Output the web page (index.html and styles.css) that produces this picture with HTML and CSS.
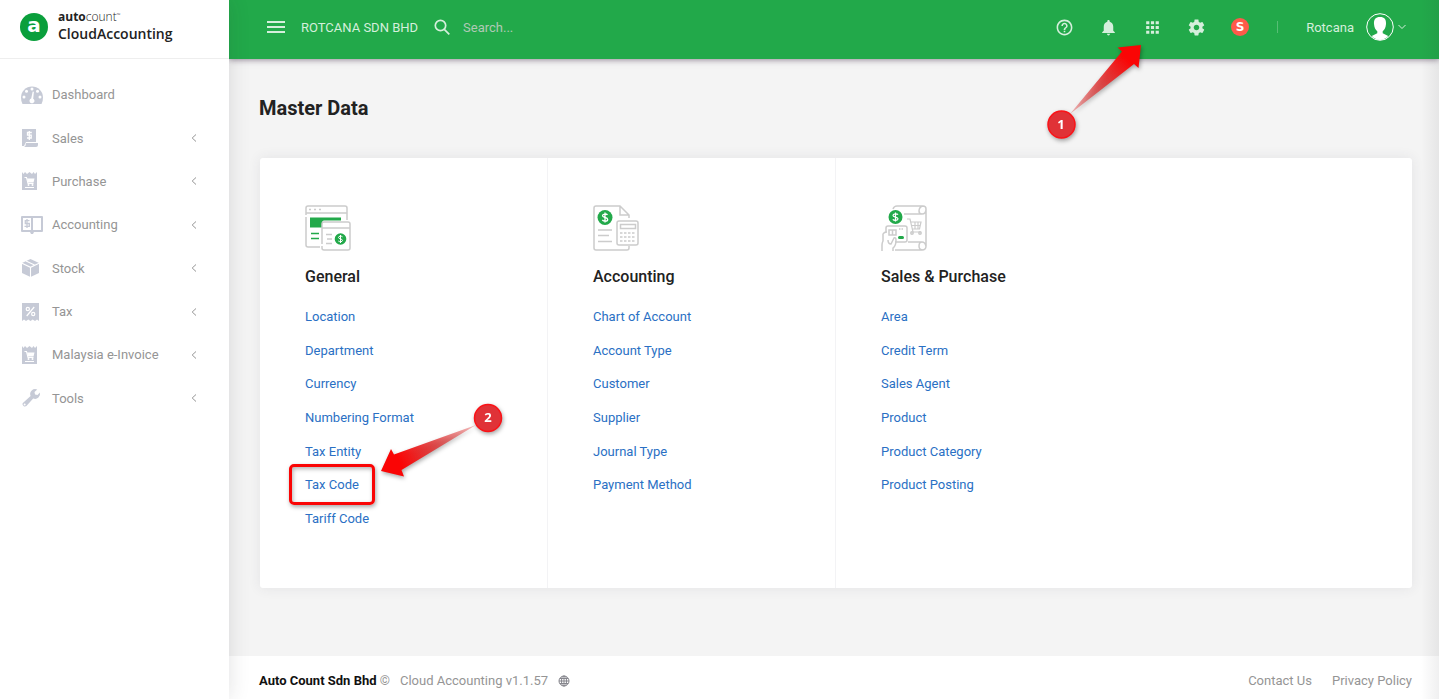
FILE: index.html
```html
<!DOCTYPE html>
<html lang="en">
<head>
  <meta charset="UTF-8" />
  <meta name="viewport" content="width=device-width, initial-scale=1" />
  <title>Master Data - AutoCount Cloud Accounting</title>
  <link rel="stylesheet" href="styles.css">
</head>
<body>
  <aside class="sidebar">
    <a class="brand" href="#">
      <span class="brand-mark">a</span>
      <span class="brand-text">
        <span class="brand-top"><b>auto</b>count<small>&#8482;</small></span>
        <span class="brand-bottom">CloudAccounting</span>
      </span>
    </a>
    <nav class="menu">
      <a href="#">
        <svg class="menu-icon" viewBox="0 0 24 20"><path d="M2.500 19Q1 16 1 12.500a11 11 0 0 1 22 0Q23 16 21.500 19z"/><g fill="#fff"><circle cx="12" cy="4" r="1.500"/><circle cx="6.500" cy="6.300" r="1.500"/><circle cx="17.500" cy="6.300" r="1.500"/><circle cx="4" cy="12" r="1.500"/><circle cx="20" cy="12" r="1.500"/><path d="M12.700 6.500l1.200.2-.7 7a2.500 2.500 0 1 1-2-.2z"/></g></svg>
        <span>Dashboard</span>
      </a>
      <a href="#">
        <svg class="menu-icon" viewBox="0 0 24 20"><path d="M2 1h14v13H6l-2 4H2zM6 15h12v2q0 2-2 2H4q2-1 2-4z"/><path d="M11.800 4.500H7.500v2.700h3.700v2.800H7M9.300 3v9" fill="none" stroke="#fff" stroke-width="1.300"/></svg>
        <span>Sales</span>
        <svg class="arrow" viewBox="0 0 6 8"><path d="M5 .5L1.200 4 5 7.500"/></svg>
      </a>
      <a href="#">
        <svg class="menu-icon" viewBox="0 0 24 20"><path d="M2 1l1.500 2L5 1l2 2 2.500-2L12 3l1.500-2L15 3l2-2v18H2z"/><path d="M4.500 6.500h2l1.500 6h5.500M5 16.500h9" fill="none" stroke="#fff" stroke-width="1.100"/><path d="M7 7.500h7.500l-1 4H8z" fill="#fff"/><g fill="#fff"><circle cx="8.500" cy="14" r="1"/><circle cx="12.500" cy="14" r="1"/></g></svg>
        <span>Purchase</span>
        <svg class="arrow" viewBox="0 0 6 8"><path d="M5 .5L1.200 4 5 7.500"/></svg>
      </a>
      <a href="#">
        <svg class="menu-icon" viewBox="0 0 24 20"><path fill-rule="evenodd" d="M2 1h20q1 0 1 1v14q0 1-1 1h-8l-1 2h-2l-1-2H2q-1 0-1-1V2q0-1 1-1zM3 3v12h8V3zM13 3v12h8V3z"/><path d="M9.500 5.700H5.300v2.800h4v2.900H4.500M7 4v9" fill="none" stroke="#c6cad6" stroke-width="1.300"/></svg>
        <span>Accounting</span>
        <svg class="arrow" viewBox="0 0 6 8"><path d="M5 .5L1.200 4 5 7.500"/></svg>
      </a>
      <a href="#">
        <svg class="menu-icon" viewBox="0 0 24 20"><path d="M10.500 1l8.500 4v10l-8.500 4L2 15V5z"/><path d="M2 5.300l8.500 4 8.500-4M10.500 9.300V19M6 3l8.500 4" fill="none" stroke="#fff" stroke-width="1.100"/></svg>
        <span>Stock</span>
        <svg class="arrow" viewBox="0 0 6 8"><path d="M5 .5L1.200 4 5 7.500"/></svg>
      </a>
      <a href="#">
        <svg class="menu-icon" viewBox="0 0 24 20"><path d="M2 1h17v18l-2-1.500-2 1.500-2.300-1.500L10.500 19l-2.200-1.500L6 19l-2-1.500L2 19z"/><g fill="none" stroke="#fff" stroke-width="1.200"><circle cx="7.800" cy="7" r="1.600"/><circle cx="13.200" cy="12" r="1.600"/><path d="M14.200 5l-7.500 9"/></g></svg>
        <span>Tax</span>
        <svg class="arrow" viewBox="0 0 6 8"><path d="M5 .5L1.200 4 5 7.500"/></svg>
      </a>
      <a href="#">
        <svg class="menu-icon" viewBox="0 0 24 20"><path d="M2 1l1.500 2L5 1l2 2 2.500-2L12 3l1.500-2L15 3l2-2v18H2z"/><path d="M4.500 6.500h2l1.500 6h5.500M5 16.500h9" fill="none" stroke="#fff" stroke-width="1.100"/><path d="M7 7.500h7.500l-1 4H8z" fill="#fff"/><g fill="#fff"><circle cx="8.500" cy="14" r="1"/><circle cx="12.500" cy="14" r="1"/></g></svg>
        <span>Malaysia e-Invoice</span>
        <svg class="arrow" viewBox="0 0 6 8"><path d="M5 .5L1.200 4 5 7.500"/></svg>
      </a>
      <a href="#">
        <svg class="menu-icon" viewBox="0 0 24 20"><path fill-rule="evenodd" d="M2.600 15.200l8-7.200a5 5 0 0 1 6.700-6.500L14.500 4l.5 2.500 2.500.6 2.400-2.600a5 5 0 0 1-6.700 6L6.400 18a2.500 2.500 0 0 1-3.800-2.800zM4.600 15.500a1 1 0 1 0 .1 2 1 1 0 0 0-.1-2z"/></svg>
        <span>Tools</span>
        <svg class="arrow" viewBox="0 0 6 8"><path d="M5 .5L1.200 4 5 7.500"/></svg>
      </a>
    </nav>
  </aside>

  <div class="page">
    <header class="topbar">
      <button class="toggle" type="button" aria-label="Toggle menu">
        <svg viewBox="0 0 18 12" width="18" height="12"><path d="M0 0h18v2H0zM0 5h18v2H0zM0 10h18v2H0z"/></svg>
      </button>
      <span class="company">ROTCANA SDN BHD</span>
      <label class="search-icon" for="search" aria-label="Search">
        <svg viewBox="0 0 16 16" width="16" height="16"><g fill="none" stroke="#d5efdc" stroke-width="1.700"><circle cx="6.500" cy="6.500" r="5.200"/><path d="M10.300 10.300l5 5"/></g></svg>
      </label>
      <input id="search" class="search" type="text" placeholder="Search...">
      <div class="tools">
        <div class="tool">
          <button type="button" aria-label="Help"><svg viewBox="0 0 24 24" width="19" height="19"><path d="M11 18h2v-2h-2v2zm1-16C6.480 2 2 6.480 2 12s4.480 10 10 10 10-4.480 10-10S17.520 2 12 2zm0 18c-4.410 0-8-3.590-8-8s3.590-8 8-8 8 3.590 8 8-3.590 8-8 8zm0-14c-2.210 0-4 1.790-4 4h2c0-1.100.9-2 2-2s2 .9 2 2c0 2-3 1.750-3 5h2c0-2.250 3-2.500 3-5 0-2.210-1.790-4-4-4z"/></svg></button>
        </div>
        <div class="tool">
          <button type="button" aria-label="Notifications"><svg viewBox="0 0 24 24" width="19" height="19"><path d="M12 22c1.100 0 2-.9 2-2h-4c0 1.100.89 2 2 2zm6-6v-5c0-3.070-1.640-5.640-4.500-6.320V4c0-.83-.67-1.500-1.500-1.500s-1.500.67-1.500 1.500v.68C7.630 5.360 6 7.920 6 11v5l-2 2v1h16v-1l-2-2z"/></svg></button>
        </div>
        <div class="tool">
          <button type="button" aria-label="Master data"><svg viewBox="0 0 24 24" width="19" height="19"><path d="M4 8h4V4H4v4zm6 12h4v-4h-4v4zm-6 0h4v-4H4v4zm0-6h4v-4H4v4zm6 0h4v-4h-4v4zm6-10v4h4V4h-4zm-6 4h4V4h-4v4zm6 6h4v-4h-4v4zm0 6h4v-4h-4v4z"/></svg></button>
          <svg class="callout callout-apps" viewBox="0 0 110 110" width="110" height="110">
            <defs>
              <linearGradient id="fadeUp" x1="30" y1="79" x2="101" y2="10" gradientUnits="userSpaceOnUse">
                <stop offset="0" stop-color="#e03030" stop-opacity=".3"/>
                <stop offset=".45" stop-color="#e03030" stop-opacity=".85"/>
                <stop offset=".8" stop-color="#fa0505"/>
              </linearGradient>
            </defs>
            <path d="M101 10L77.500 12.500 82 16.500 30 79 94 29 98.500 33z" fill="url(#fadeUp)"/>
            <circle cx="21.500" cy="89.500" r="13.500" fill="#e03237" stroke="#fb1217" stroke-width="1.500"/>
            <text x="21" y="94">1</text>
          </svg>
        </div>
        <div class="tool">
          <button type="button" aria-label="Settings"><svg viewBox="0 0 24 24" width="19" height="19"><path d="M19.430 12.980c.04-.32.070-.64.070-.98s-.03-.66-.07-.98l2.110-1.650c.19-.15.240-.42.120-.64l-2-3.460c-.12-.22-.39-.3-.61-.22l-2.490 1c-.52-.4-1.080-.73-1.690-.98l-.38-2.650C14.460 2.180 14.250 2 14 2h-4c-.25 0-.46.180-.49.420l-.38 2.650c-.61.250-1.170.590-1.690.980l-2.490-1c-.23-.09-.49 0-.61.220l-2 3.460c-.13.220-.07.490.120.640l2.110 1.650c-.04.320-.07.650-.07.980s.03.660.070.980l-2.110 1.650c-.19.150-.24.420-.12.640l2 3.460c.12.220.390.300.610.220l2.490-1c.52.400 1.080.730 1.690.980l.38 2.650c.03.240.240.420.490.420h4c.25 0 .46-.18.490-.42l.38-2.650c.61-.25 1.170-.59 1.690-.98l2.490 1c.23.090.49 0 .61-.22l2-3.460c.12-.22.070-.49-.12-.64l-2.110-1.650zM12 15.500c-1.930 0-3.500-1.570-3.500-3.500s1.570-3.500 3.500-3.500 3.500 1.570 3.500 3.500-1.570 3.500-3.500 3.500z"/></svg></button>
        </div>
        <div class="tool">
          <button class="status-dot" type="button">S</button>
        </div>
      </div>
      <span class="divider"></span>
      <button class="user" type="button">
        <span>Rotcana</span>
        <svg viewBox="0 0 28 28" width="28" height="28" aria-hidden="true">
          <circle cx="14" cy="14" r="13.300" fill="none" stroke="#fff" stroke-width="1"/>
          <path d="M14 4c4.500 0 6.300 2.600 6 7-.3 3.500-1.500 6-3.300 7.300v2l5.500 2.700A12 12 0 0 1 14 27a12 12 0 0 1-8.200-4l5.500-2.700v-2C9.500 17 8.300 14.500 8 11c-.3-4.400 1.500-7 6-7z" fill="#fff"/>
        </svg>
        <svg viewBox="0 0 8 6" width="8" height="6" aria-hidden="true"><path d="M.5 1L4 4.500 7.500 1" fill="none" stroke="#d5efdc"/></svg>
      </button>
    </header>

    <main class="content">
      <h1>Master Data</h1>
      <div class="card">
        <section class="group">
          <svg class="group-icon" viewBox="0 0 46 46" width="46" height="46" fill="none" stroke="#ccc" stroke-width="1.500">
            <path d="M1 10V3q0-2 2-2h37q2 0 2 2v12M1 12v28q0 2 2 2h12M1 8h41"/>
            <path d="M4 4.500h2M9 4.500h2M14 4.500h2"/>
            <path d="M5 12.500h31v3H19q-2 0-2 3v4H5z" fill="#22a94a" stroke="none"/>
            <path d="M6 28.500h8M6 33.500h8" stroke="#22a94a"/>
            <path d="M17 39V19q0-2 2-2h24q2 0 2 2v24q0 2-2 2H19q-2 0-2-2v-2M17 23h28M21 29.500h6M22 34h5M21 38.500h6"/>
            <circle cx="35.500" cy="34" r="5.800" fill="#22a94a" stroke="none"/>
            <path d="M37.500 31.800c-1-1-4-.9-4 .7s4 1.200 4 2.900-3 1.600-4.200.6M35.500 30v8" stroke="#fff" stroke-width="1"/>
          </svg>
          <h2>General</h2>
          <ul>
            <li><a href="#">Location</a></li>
            <li><a href="#">Department</a></li>
            <li><a href="#">Currency</a></li>
            <li><a href="#">Numbering Format</a></li>
            <li><a href="#">Tax Entity</a></li>
            <li class="marked">
              <a href="#">Tax Code</a>
              <svg class="callout callout-tax" viewBox="0 0 140 90" width="140" height="90">
                <defs>
                  <linearGradient id="fadeDown" x1="106" y1="25" x2="11" y2="71" gradientUnits="userSpaceOnUse">
                    <stop offset="0" stop-color="#e03030" stop-opacity=".3"/>
                    <stop offset=".45" stop-color="#e03030" stop-opacity=".85"/>
                    <stop offset=".8" stop-color="#fa0505"/>
                  </linearGradient>
                </defs>
                <path d="M11 71L21 49l3 5.500L106 25 31.500 70l2.500 6.500z" fill="url(#fadeDown)"/>
                <circle cx="118" cy="18" r="13.500" fill="#e03237" stroke="#fb1217" stroke-width="1.500"/>
                <text x="118" y="22">2</text>
              </svg>
            </li>
            <li><a href="#">Tariff Code</a></li>
          </ul>
        </section>
        <section class="group">
          <svg class="group-icon" viewBox="0 0 46 46" width="46" height="46" fill="none" stroke="#ccc" stroke-width="1.500">
            <path d="M36 13v-3L27 1H3Q1 1 1 3v40q0 2 2 2h31q2 0 2-2v-2M27 1v9h9"/>
            <circle cx="12" cy="12.500" r="7.500" fill="#22a94a" stroke="none"/>
            <path d="M14.500 10c-1-1.500-5-1.300-5 .8s5.200 1.300 5.200 3.600-4 2.200-5.400.6M12 7.500v10" stroke="#fff" stroke-width="1.300"/>
            <path d="M5 25h14M5 30.500h11M5 36.500h14"/>
            <rect x="24" y="16" width="21" height="24" rx="2"/>
            <rect x="27.500" y="19.500" width="15" height="4"/>
            <path d="M27 28h16M27 32h16M27 36h16" stroke-dasharray="2.500 1.500"/>
          </svg>
          <h2>Accounting</h2>
          <ul>
            <li><a href="#">Chart of Account</a></li>
            <li><a href="#">Account Type</a></li>
            <li><a href="#">Customer</a></li>
            <li><a href="#">Supplier</a></li>
            <li><a href="#">Journal Type</a></li>
            <li><a href="#">Payment Method</a></li>
          </ul>
        </section>
        <section class="group">
          <svg class="group-icon" viewBox="0 0 46 46" width="46" height="46" fill="none" stroke="#ccc" stroke-width="1.500">
            <path d="M12 4q1-3 4-3h26q3 0 3 3v37q0 4-4 4H14M42 1q-4 1-4 5 0 3 3 3 4 0 4-5M23 9h18M45 41q-1-4-4-4-3 0-3 4t4 4M27 37h14"/>
            <circle cx="14.500" cy="12" r="7" fill="#22a94a" stroke="none"/>
            <path d="M17 9.700c-1-1.400-5-1.200-5 .8s5 1.200 5 3.300-4 2-5.200.6M14.500 7.500v9" stroke="#fff" stroke-width="1.200"/>
            <path d="M26 14h3l3 13h8M30 17h10l-1.500 7H31.500M30.500 20.500h9M34 17v7M37 17v7" stroke-width="1.200"/>
            <circle cx="31" cy="28" r="1.200"/><circle cx="39" cy="28" r="1.200"/>
            <path d="M5 27v-4q0-2 2-2h17q2 0 2 2v12q0 2-2 2H14M8 25h7v5H8zM11.500 25v5"/>
            <path d="M18 24h5" stroke-dasharray="1.500 1"/>
            <rect x="17" y="31" width="6" height="3" rx="1.500" fill="#22a94a" stroke="none"/>
            <path d="M1 46v-6q0-2 1-4V29q1-2 4-2M12 46v-3q3-2 3-8 0-3-2-2l-3 6q-3 0-3-4"/>
          </svg>
          <h2>Sales &amp; Purchase</h2>
          <ul>
            <li><a href="#">Area</a></li>
            <li><a href="#">Credit Term</a></li>
            <li><a href="#">Sales Agent</a></li>
            <li><a href="#">Product</a></li>
            <li><a href="#">Product Category</a></li>
            <li><a href="#">Product Posting</a></li>
          </ul>
        </section>
      </div>
    </main>

    <footer class="footer">
      <span><b>Auto Count Sdn Bhd</b> &copy;</span>
      <span>Cloud Accounting v1.1.57</span>
      <button type="button" aria-label="Language">
        <svg viewBox="0 0 12 12" width="12" height="12" fill="none" stroke="#85858c"><circle cx="6" cy="6" r="5"/><ellipse cx="6" cy="6" rx="2.500" ry="5"/><path d="M6 1v10M1 6h10M2 3.500h8M2 8.500h8"/></svg>
      </button>
      <div class="footer-links">
        <a href="#">Contact Us</a>
        <a href="#">Privacy Policy</a>
      </div>
    </footer>
  </div>
</body>
</html>
```
FILE: styles.css
```css
* {
  box-sizing: border-box;
}
body {
  margin: 0;
  min-height: 100vh;
  display: flex;
  background: #f4f4f4;
  font-family: Roboto, "Liberation Sans", sans-serif;
  font-size: 13px;
  color: #959595;
}
a {
  color: inherit;
  text-decoration: none;
}
button {
  padding: 0;
  border: none;
  background: none;
  font: inherit;
  color: inherit;
  cursor: pointer;
}
svg {
  display: block;
  flex-shrink: 0;
}

/* sidebar */
.sidebar {
  flex: 0 0 229px;
  background: #fff;
  position: relative;
  z-index: 3;
  box-shadow: 0 0 20px rgba(40, 40, 50, 0.14);
}
.brand {
  display: flex;
  align-items: center;
  gap: 10px;
  height: 59px;
  padding: 0 20px 5px;
  border-bottom: 1px solid #eee;
}
.brand-mark {
  width: 28px;
  height: 28px;
  border-radius: 50%;
  background: #0a9f3c;
  color: #fff;
  font-family: "DejaVu Sans", sans-serif;
  font-size: 20px;
  font-weight: 700;
  line-height: 24px;
  text-align: center;
}
.brand-text {
  display: flex;
  flex-direction: column;
  padding-bottom: 3px;
  font-family: "Open Sans", sans-serif;
  color: #222;
}
.brand-top {
  font-size: 12px;
  font-weight: 300;
  line-height: 17px;
}
.brand-top b {
  font-weight: 700;
}
.brand-top small {
  font-size: 5px;
  line-height: 5px;
  vertical-align: 4px;
}
.brand-bottom {
  font-size: 14px;
  font-weight: 600;
  line-height: 17px;
}
.menu {
  display: grid;
  grid-auto-rows: 1fr;
  min-height: 361px;
  padding-top: 14px;
}
.menu a {
  display: flex;
  align-items: center;
  gap: 8px;
  padding: 0 32px 0 20px;
}
.menu-icon {
  width: 24px;
  height: 20px;
  fill: #c6cad6;
}
.menu span {
  flex: 1;
}
.arrow {
  width: 6px;
  height: 8px;
  fill: none;
  stroke: #959595;
}

/* top bar */
.page {
  flex: 1;
  min-width: 0;
  display: flex;
  flex-direction: column;
  position: relative;
}
.page::after {
  content: "";
  position: absolute;
  inset: 0;
  z-index: 4;
  pointer-events: none;
  background: linear-gradient(to left, rgba(40, 40, 50, 0.07), transparent 18px);
}
.topbar {
  display: flex;
  align-items: center;
  height: 59px;
  padding: 0 33px 5px 38px;
  background: #22a94a;
  color: #d5efdc;
  position: relative;
  z-index: 2;
  box-shadow: 0 1px 6px rgba(50, 30, 60, 0.5);
}
.topbar svg {
  fill: #d5efdc;
}
.company {
  margin: 0 16px;
}
.search {
  flex: 1;
  min-width: 0;
  margin-left: 13px;
  padding: 0;
  border: none;
  outline: none;
  background: none;
  font: inherit;
  color: #d5efdc;
}
.search::placeholder {
  color: #b0c9b5;
  opacity: 1;
}
.tools {
  display: flex;
}
.tool {
  width: 44px;
  display: flex;
  justify-content: center;
  align-items: center;
  position: relative;
}
.status-dot {
  width: 18px;
  height: 18px;
  border-radius: 50%;
  background: #ff5a4a;
  color: #fff;
  font-family: "DejaVu Sans", sans-serif;
  font-size: 12px;
  font-weight: 700;
  line-height: 18px;
}
.divider {
  width: 1px;
  height: 12px;
  margin: 0 28px 0 15px;
  background: #57be75;
}
.user {
  display: flex;
  align-items: center;
  gap: 12px;
}
.user svg + svg {
  margin-left: -8px;
}

/* content */
.content {
  flex: 1;
  display: flex;
  flex-direction: column;
  padding: 37px 27px 68px 30px;
}
h1 {
  margin: 0 0 38px;
  font-size: 20px;
  font-weight: 700;
  line-height: 24px;
  color: #222;
}
.card {
  flex: 1;
  display: grid;
  grid-template-columns: repeat(4, 1fr);
  margin-left: 1px;
  background: #fff;
  border-radius: 3px;
  box-shadow: 0 0 13px rgba(60, 60, 80, 0.09);
}
.group {
  display: flex;
  flex-direction: column;
  padding: 47px 20px 53px 45px;
}
.group:not(:last-child) {
  border-right: 1px solid #f3f3f5;
}
h2 {
  margin: 16px 0 13px;
  font-size: 16px;
  font-weight: 500;
  line-height: 20px;
  color: #222;
}
.group ul {
  flex: 1;
  display: grid;
  grid-template-rows: repeat(7, 1fr);
  margin: 0;
  padding: 0;
  list-style: none;
}
.group li {
  display: flex;
  align-items: center;
  color: #2a70c4;
}

/* walkthrough callouts */
.marked {
  position: relative;
}
.marked::before {
  content: "";
  box-sizing: border-box;
  position: absolute;
  left: -16px;
  top: -4px;
  width: 86px;
  height: 41px;
  border: 3px solid #fa0505;
  border-radius: 5px;
  box-shadow: 1px 2px 4px rgba(0, 0, 0, 0.35), inset 1px 2px 4px rgba(0, 0, 0, 0.3);
  pointer-events: none;
}
.callout {
  position: absolute;
  overflow: visible;
  pointer-events: none;
  filter: drop-shadow(1px 2px 2px rgba(0, 0, 0, 0.35));
}
.callout text {
  fill: #fff;
  font-family: "Open Sans", sans-serif;
  font-size: 13px;
  font-weight: 700;
  text-anchor: middle;
}
.callout-apps {
  left: -90px;
  top: 17px;
}
.callout-tax {
  left: 65px;
  top: -68px;
}

/* footer */
.footer {
  display: flex;
  align-items: center;
  gap: 10px;
  min-height: 43px;
  padding: 6px 27px 0 30px;
  background: #fff;
}
.footer b {
  color: #111;
}
.footer-links {
  display: flex;
  gap: 20px;
  margin-left: auto;
}
```
